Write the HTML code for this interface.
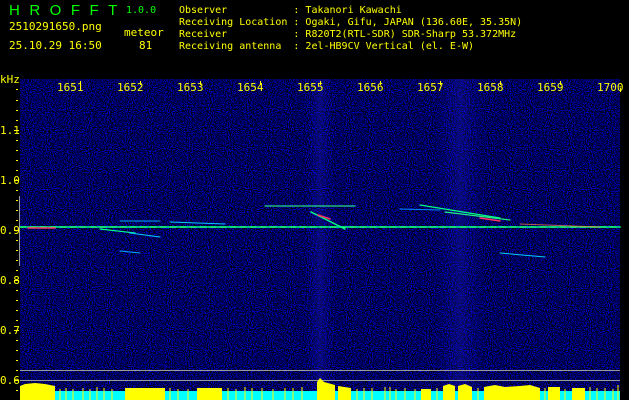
<!DOCTYPE html>
<html><head><meta charset="utf-8"><style>
html,body{margin:0;padding:0;background:#000;width:629px;height:400px;overflow:hidden}
.t{position:absolute;color:#ff0;font-family:"DejaVu Sans Mono","Liberation Mono",monospace;font-size:10px;line-height:12px;white-space:pre}
.g{color:#0f0}
</style></head><body>
<div class="t g" style="left:9px;top:3px;font-size:15px;line-height:15px;letter-spacing:9.5px;font-family:'Liberation Sans',sans-serif">HROFFT</div>
<div class="t g" style="left:126px;top:5px;font-size:10px">1.0.0</div>
<div class="t" style="left:9px;top:21px;font-size:11px">2510291650.png</div>
<div class="t" style="left:124px;top:27px;font-size:11px">meteor</div>
<div class="t" style="left:9px;top:40px;font-size:11px">25.10.29 16:50</div>
<div class="t" style="left:139px;top:40px;font-size:11px">81</div>
<div class="t" style="left:179px;top:5px">Observer           : Takanori Kawachi
Receiving Location : Ogaki, Gifu, JAPAN (136.60E, 35.35N)
Receiver           : R820T2(RTL-SDR) SDR-Sharp 53.372MHz
Receiving antenna  : 2el-HB9CV Vertical (el. E-W)</div>
<div class="t" style="left:0px;top:74px;font-size:11px">kHz</div>
<svg width="629" height="400" style="position:absolute;left:0;top:0">
<defs>
<filter id="n" x="0" y="0" width="100%" height="100%" color-interpolation-filters="sRGB">
<feTurbulence type="fractalNoise" baseFrequency="0.95" numOctaves="1" seed="4"/>
<feColorMatrix values="0 0 0 0 0  0 0 0 0 0  0 0 3 0 -1.15  0 0 0 0 1"/>
</filter>
<linearGradient id="b1" x1="0" x2="1"><stop offset="0" stop-color="#22f" stop-opacity="0"/><stop offset=".5" stop-color="#33f" stop-opacity=".2"/><stop offset="1" stop-color="#22f" stop-opacity="0"/></linearGradient>
</defs>
<rect x="20" y="79" width="600" height="321" fill="#000040"/>
<rect x="20" y="79" width="600" height="321" filter="url(#n)"/>
<rect x="305" y="79" width="30" height="321" fill="url(#b1)"/>
<rect x="435" y="79" width="50" height="321" fill="url(#b1)"/>
<g stroke-linecap="round" fill="none">
<line x1="20" y1="227" x2="620" y2="227" stroke="#0c8" stroke-width="2" opacity=".9"/>
<line x1="20" y1="227" x2="620" y2="227" stroke="#2f6" stroke-width="1" stroke-dasharray="6 4"/>
<line x1="28" y1="228" x2="55" y2="228" stroke="#f36" stroke-width="1.5"/>
<line x1="265" y1="206" x2="355" y2="206" stroke="#2d8" stroke-width="1.2"/>
<line x1="311" y1="212" x2="345" y2="229" stroke="#0f8" stroke-width="1.5"/>
<line x1="318" y1="215" x2="330" y2="219" stroke="#f36" stroke-width="1.5"/>
<line x1="420" y1="205" x2="500" y2="218" stroke="#0f8" stroke-width="1.2"/>
<line x1="445" y1="212" x2="510" y2="220" stroke="#2e8" stroke-width="1.2"/>
<line x1="480" y1="218" x2="500" y2="221" stroke="#f36" stroke-width="1.5"/>
<line x1="400" y1="209" x2="440" y2="210" stroke="#08f" stroke-width="1"/>
<line x1="120" y1="221" x2="160" y2="221" stroke="#0af" stroke-width="1"/>
<line x1="100" y1="229" x2="135" y2="233" stroke="#0f8" stroke-width="1.2"/>
<line x1="130" y1="233" x2="160" y2="237" stroke="#0cf" stroke-width="1"/>
<line x1="170" y1="222" x2="225" y2="224" stroke="#0cf" stroke-width="1"/>
<line x1="120" y1="251" x2="140" y2="253" stroke="#0af" stroke-width="1"/>
<line x1="500" y1="253" x2="545" y2="257" stroke="#0cf" stroke-width="1"/>
<line x1="520" y1="224" x2="600" y2="227" stroke="#f84" stroke-width="1" opacity=".7"/>
</g>
<line x1="20" y1="370.5" x2="620" y2="370.5" stroke="#999"/>
<line x1="20" y1="380.5" x2="620" y2="380.5" stroke="#999"/>
<line x1="19.5" y1="196" x2="19.5" y2="266" stroke="#999"/>
<rect x="20" y="391" width="600" height="9" fill="#0ff"/>
<path d="M20 400V386L25 384L35 383L45 384L55 386V400ZM125 400V388L165 388V400ZM197 400V388L222 388V400ZM317 400V382L320 378L324 382L335 385V400ZM338 400V386L351 388V400ZM421 400V389L431 389V400ZM443 400V386L449 384L455 386V400ZM458 400V386L465 384L472 387V400ZM484 400V387L495 385L505 387L520 386L530 385L540 388V400ZM548 400V387L560 387V400ZM572 400V388L585 388V400Z" fill="#ff0"/>
<g stroke="#ff0" stroke-width="1">
<path d="M60 389V400M66 388V400M73 389V400M83 388V400M90 389V400M97 387V400M104 388V400M112 389V400M170 388V400M178 389V400M188 389V400M228 388V400M236 389V400M245 387V400M252 388V400M262 388V400M273 389V400M285 388V400M293 388V400M302 387V400M357 389V400M364 388V400M372 388V400M385 387V400M390 387V400M396 389V400M405 388V400M415 389V400M437 388V400M478 388V400M545 388V400M565 389V400M590 387V400M597 388V400M605 388V400M613 389V400M618 385V400"/>
</g>
<g fill="#ff0">
<rect x="80" y="81" width="1" height="4"/><rect x="140" y="81" width="1" height="4"/><rect x="200" y="81" width="1" height="4"/><rect x="260" y="81" width="1" height="4"/><rect x="320" y="81" width="1" height="4"/><rect x="380" y="81" width="1" height="4"/><rect x="440" y="81" width="1" height="4"/><rect x="500" y="81" width="1" height="4"/><rect x="560" y="81" width="1" height="4"/><rect x="620" y="88" width="1" height="4"/>
<rect x="16" y="89" width="2" height="1"/>
</g>
<g fill="#ff0" font-family="DejaVu Sans Mono,Liberation Mono,monospace" font-size="11">
<text x="57" y="91">1651</text><text x="117" y="91">1652</text><text x="177" y="91">1653</text><text x="237" y="91">1654</text><text x="297" y="91">1655</text><text x="357" y="91">1656</text><text x="417" y="91">1657</text><text x="477" y="91">1658</text><text x="537" y="91">1659</text><text x="597" y="91">1700</text>
<text x="0" y="134">1.1</text><text x="0" y="184">1.0</text><text x="0" y="234">0.9</text><text x="0" y="284">0.8</text><text x="0" y="334">0.7</text><text x="0" y="384">0.6</text>
</g>
<g fill="#ff0">
<rect x="14" y="130" width="5" height="1"/><rect x="14" y="180" width="5" height="1"/><rect x="14" y="230" width="5" height="1"/><rect x="14" y="280" width="5" height="1"/><rect x="14" y="330" width="5" height="1"/><rect x="14" y="380" width="5" height="1"/>
<path d="M16 100h2v1h-2zM16 110h2v1h-2zM16 120h2v1h-2zM16 140h2v1h-2zM16 150h2v1h-2zM16 160h2v1h-2zM16 170h2v1h-2zM16 190h2v1h-2zM16 200h2v1h-2zM16 210h2v1h-2zM16 220h2v1h-2zM16 240h2v1h-2zM16 250h2v1h-2zM16 260h2v1h-2zM16 270h2v1h-2zM16 290h2v1h-2zM16 300h2v1h-2zM16 310h2v1h-2zM16 320h2v1h-2zM16 340h2v1h-2zM16 350h2v1h-2zM16 360h2v1h-2zM16 370h2v1h-2zM16 390h2v1h-2z"/>
</g>
</svg>
</body></html>
